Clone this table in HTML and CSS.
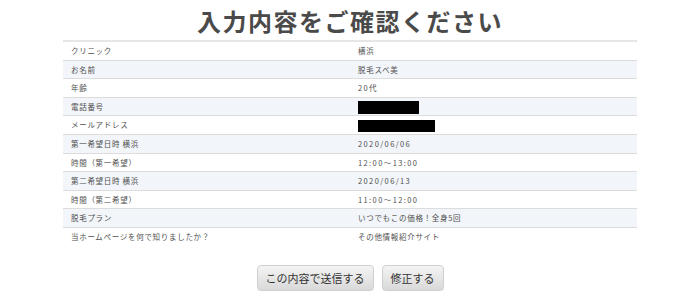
FILE: index.html
```html
<!doctype html>
<html lang="ja">
  <head>
    <meta charset="UTF-8" />
    <meta name="viewport" content="width=device-width, initial-scale=1.0" />
    <title>入力内容をご確認ください</title>
    <link rel="stylesheet" href="styles.css">
  </head>
  <body>
    <div class="container">
      <h1>入力内容をご確認ください</h1>

      <table class="confirm">
        <tr><th>クリニック</th><td>横浜</td></tr>
        <tr><th>お名前</th><td>脱毛スベ美</td></tr>
        <tr><th>年齢</th><td class="num">20代</td></tr>
        <tr><th>電話番号</th><td><span class="masked tel"></span></td></tr>
        <tr><th>メールアドレス</th><td><span class="masked mail"></span></td></tr>
        <tr><th>第一希望日時 横浜</th><td class="num">2020/06/06</td></tr>
        <tr><th>時間（第一希望）</th><td class="num">12:00〜13:00</td></tr>
        <tr><th>第二希望日時 横浜</th><td class="num">2020/06/13</td></tr>
        <tr><th>時間（第二希望）</th><td class="num">11:00〜12:00</td></tr>
        <tr><th>脱毛プラン</th><td>いつでもこの価格！全身5回</td></tr>
        <tr><th>当ホームページを何で知りましたか？</th><td>その他情報紹介サイト</td></tr>
      </table>

      <div class="actions">
        <button type="submit">この内容で送信する</button>
        <button type="button">修正する</button>
      </div>
    </div>
  </body>
</html>
```

FILE: styles.css
```css
body {
  margin: 0;
  font-family: "Noto Sans CJK JP", "Noto Sans", sans-serif;
  background: #fff;
  color: #555;
}
.container {
  width: 574px;
  margin: 0 auto;
}
h1 {
  margin: 4px 0 3px;
  font-size: 24px;
  line-height: 33px;
  font-weight: 700;
  color: #4a4a4a;
  text-align: center;
  letter-spacing: 1.5px;
}
.confirm {
  width: 100%;
  border-collapse: collapse;
  border-top: 2px solid #e6e6e6;
  table-layout: fixed;
}
.confirm th,
.confirm td {
  width: 50%;
  padding: 0 8px;
  height: 17.6px;
  line-height: 17.6px;
  font-size: 7.5px;
  font-weight: normal;
  letter-spacing: 0.7px;
  text-align: left;
  border-bottom: 1px solid #dcdcdc;
  color: #4f4f4f;
}
.confirm td.num {
  letter-spacing: 1.4px;
}
.confirm tr:nth-child(even) {
  background: #f2f5f9;
}
.confirm tr:last-child th,
.confirm tr:last-child td {
  border-bottom: none;
}
.masked {
  display: inline-block;
  vertical-align: middle;
  background: #000;
}
.masked.tel {
  width: 61px;
  height: 13px;
}
.masked.mail {
  width: 77px;
  height: 12px;
}
.actions {
  display: flex;
  justify-content: center;
  gap: 8px;
  margin-top: 19px;
}
button {
  font-family: "Noto Sans CJK JP", sans-serif;
  font-size: 11px;
  color: #333;
  height: 26px;
  padding: 0 8px;
  border: 1px solid #d0d0d0;
  border-radius: 4px;
  background: linear-gradient(#f4f4f4, #d9d9d9);
  box-shadow: 0 1px 1px rgba(0, 0, 0, 0.08);
  cursor: pointer;
}
button:hover {
  background: linear-gradient(#fafafa, #e2e2e2);
}
```
